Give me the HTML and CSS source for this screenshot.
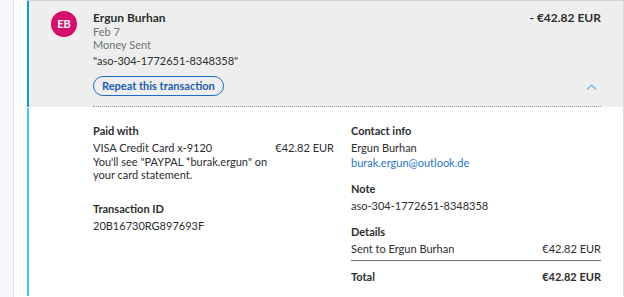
FILE: index.html
```html
<!DOCTYPE html>
<html lang="en">
<head>
    <meta charset="UTF-8">
    <meta name="viewport" content="width=device-width, initial-scale=1.0">
    <title>Activity</title>
    <link rel="stylesheet" href="styles.css">
</head>
<body>
    <div class="gutter"></div>
    <div class="main">
        <div class="transaction">
            <div class="summary">
                <div class="avatar">EB</div>
                <div class="summary-body">
                    <div class="summary-top">
                        <div class="summary-info">
                            <div class="name">Ergun Burhan</div>
                            <div class="meta">Feb 7</div>
                            <div class="meta">Money Sent</div>
                            <div class="memo">"aso-304-1772651-8348358"</div>
                        </div>
                        <div class="amount">- €42.82 EUR</div>
                    </div>
                    <div class="summary-actions">
                        <button class="repeat">Repeat this transaction</button>
                        <svg class="chevron" width="11" height="6" viewBox="0 0 11 6">
                            <path d="M1 5.5 L5.5 1 L10 5.5" fill="none" stroke="#6fb3ee" stroke-width="1.2"/>
                        </svg>
                    </div>
                </div>
            </div>
            <div class="details">
                <div class="col col-left">
                    <div class="block">
                        <div class="label">Paid with</div>
                        <div class="row">
                            <span>VISA Credit Card x-9120</span>
                            <span>€42.82 EUR</span>
                        </div>
                        <div class="note">You'll see "PAYPAL *burak.ergun" on your card statement.</div>
                    </div>
                    <div class="block">
                        <div class="label">Transaction ID</div>
                        <div class="value">20B16730RG897693F</div>
                    </div>
                </div>
                <div class="col col-right">
                    <div class="block">
                        <div class="label">Contact info</div>
                        <div class="value">Ergun Burhan</div>
                        <a class="email" href="#">burak.ergun@outlook.de</a>
                    </div>
                    <div class="block">
                        <div class="label">Note</div>
                        <div class="value">aso-304-1772651-8348358</div>
                    </div>
                    <div class="block">
                        <div class="label">Details</div>
                        <div class="row line-item">
                            <span>Sent to Ergun Burhan</span>
                            <span>€42.82 EUR</span>
                        </div>
                        <div class="row total">
                            <span>Total</span>
                            <span>€42.82 EUR</span>
                        </div>
                    </div>
                </div>
            </div>
        </div>
    </div>
</body>
</html>
```

FILE: styles.css
```css
body {
    margin: 0;
    display: flex;
    min-height: 297px;
    font-family: Lato, "Noto Sans", sans-serif;
    font-size: 11px;
    line-height: 14px;
    color: #2c2e2f;
    background-color: #fff;
}

.gutter {
    width: 13px;
    flex-shrink: 0;
    background-color: #f5f7fa;
    border-right: 1px solid #dfe3e7;
}

.main {
    width: 606px;
    padding-left: 13px;
}

.transaction {
    border-top: 1px solid #cbd2d6;
    border-right: 1px solid #d9dde0;
}

.summary {
    display: flex;
    gap: 16px;
    padding: 9px 22px 0 22px;
    background-color: #eeeeee;
    border-left: 2px solid #0d9ad6;
    margin-bottom: 1px;
}

.avatar {
    width: 26px;
    height: 26px;
    margin-top: 1px;
    border-radius: 50%;
    background-color: #d60f6a;
    color: #fff;
    font-weight: bold;
    font-size: 11px;
    display: flex;
    align-items: center;
    justify-content: center;
    flex-shrink: 0;
}

.summary-body {
    flex: 1;
    border-bottom: 1px dotted #9a9a9a;
}

.summary-top {
    display: flex;
    justify-content: space-between;
}

.name {
    font-weight: bold;
    font-size: 12px;
    line-height: 15px;
}

.meta {
    color: #6c7378;
    line-height: 13px;
}

.memo {
    margin-top: 3px;
}

.amount {
    font-weight: bold;
    font-size: 12px;
    line-height: 15px;
}

.summary-actions {
    display: flex;
    justify-content: space-between;
    align-items: flex-end;
    padding: 8px 0 10px;
}

.repeat {
    font-family: inherit;
    font-size: 11px;
    font-weight: bold;
    color: #1a5db0;
    background: transparent;
    border: 1px solid #1a6ec0;
    border-radius: 12px;
    padding: 2px 8px;
    line-height: 14px;
}

.chevron {
    margin: 0 4px 6px 0;
}

.details {
    display: grid;
    grid-template-columns: 241px 1fr;
    column-gap: 17px;
    padding: 16px 22px 12px 64px;
    border-left: 2px solid #4cc2f6;
}

.block {
    margin-bottom: 21px;
}

.col-right .block {
    margin-bottom: 12px;
}

.col .block:last-child {
    margin-bottom: 0;
}

.label {
    font-weight: bold;
    margin-bottom: 3px;
}

.row {
    display: flex;
    justify-content: space-between;
}

.note {
    max-width: 180px;
    line-height: 13px;
}

.email {
    display: block;
    color: #1f74c8;
    text-decoration: none;
    margin-top: 1px;
}

.line-item {
    padding-bottom: 4px;
    border-bottom: 1px solid #6c7378;
}

.total {
    font-weight: bold;
    margin-top: 9px;
}
```
